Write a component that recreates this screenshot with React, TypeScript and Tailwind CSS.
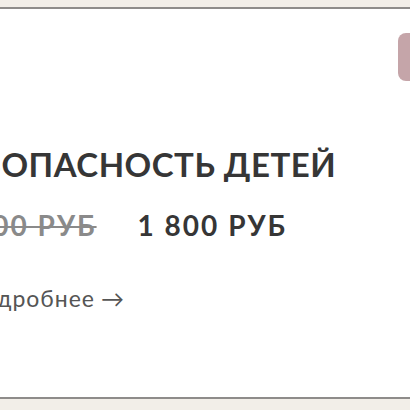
import React from "react";

function PriceCard() {
  return (
    <div className="relative h-[392px] border-y-2 border-[#8e8c8a] bg-white">
      <div className="absolute right-[-14px] top-[24px] h-[48px] w-[26px] rounded-[8px] bg-[#c5a5a9]" />
      <div className="flex flex-col pt-[135px] font-['Lato',sans-serif] text-[#363636]">
        <h2 className="ml-[-59px] whitespace-nowrap text-[33px] font-bold leading-[40px] tracking-[0.5px]">
          БЕЗОПАСНОСТЬ ДЕТЕЙ
        </h2>
        <div className="ml-[-53px] mt-[24px] flex items-baseline gap-[41px] whitespace-nowrap text-[28px] font-bold leading-[34px] tracking-[2px]">
          <span className="text-[#8a8a8a] line-through decoration-2">2 500 РУБ</span>
          <span>1 800 РУБ</span>
        </div>
        <a className="ml-[-34px] mt-[42px] flex items-center gap-[6px] whitespace-nowrap text-[23px] leading-[28px] tracking-[1px] text-[#555]">
          Подробнее <span>→</span>
        </a>
      </div>
    </div>
  );
}

export default function App() {
  return (
    <div className="h-[410px] w-[410px] overflow-hidden bg-[#f2eee8] pt-[7px]">
      <PriceCard />
    </div>
  );
}
